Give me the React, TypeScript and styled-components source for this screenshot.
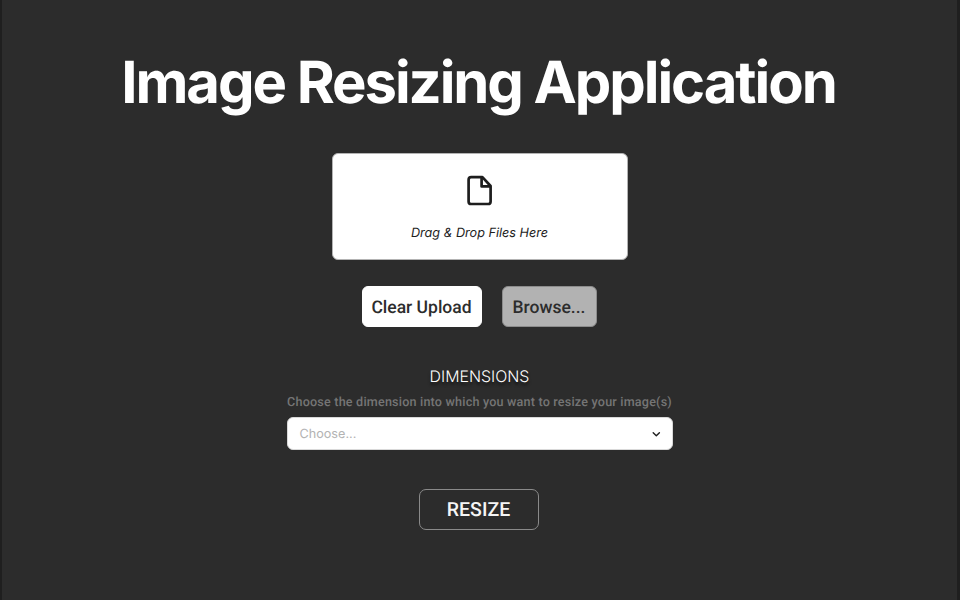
import React from "react";
import styled, { createGlobalStyle } from "styled-components";

const GlobalStyle = createGlobalStyle`
  *, *::before, *::after { box-sizing: border-box; }
  body {
    margin: 0;
    background: #2c2c2c;
    font-family: Inter, sans-serif;
    text-rendering: geometricPrecision;
    -webkit-font-smoothing: antialiased;
  }
  button { font-family: Roboto, sans-serif; text-rendering: inherit; cursor: pointer; }
`;

const Page = styled.main`
  display: flex;
  flex-direction: column;
  align-items: center;
  width: 100%;
  height: 600px;
  padding-top: 47px;
  background: #2c2c2c;
  border-left: 2px solid #1f1f1f;
  border-right: 3px solid #1f1f1f;
  overflow: hidden;
`;

const Title = styled.h1`
  margin: 0 2px 0 0;
  color: #fff;
  font-size: 58px;
  font-weight: 700;
  line-height: 70px;
  letter-spacing: -2.07px;
  white-space: nowrap;
`;

const DropZone = styled.section`
  display: flex;
  flex-direction: column;
  align-items: center;
  width: 296px;
  height: 107px;
  margin-top: 36px;
  padding-top: 20px;
  background: #fff;
  border: 1px solid #b3b3b3;
  border-radius: 6px;
`;

const DropText = styled.p`
  margin: 19px 0 0;
  color: #1e1e1e;
  font-size: 12.65px;
  font-style: italic;
  line-height: 16px;
`;

const Actions = styled.div`
  display: flex;
  gap: 20px;
  margin-top: 26px;
`;

const ActionButton = styled.button<{ $width: number; $muted?: boolean }>`
  width: ${(p) => p.$width}px;
  height: 41px;
  padding: 3px 1px 0 0;
  color: #2c2c2c;
  background: ${(p) => (p.$muted ? "#b2b2b2" : "#fff")};
  border: 1px solid ${(p) => (p.$muted ? "#8c8c8c" : "#fff")};
  border-radius: 6px;
  font-size: 17.5px;
  font-weight: 500;
  line-height: 20px;
`;

const Field = styled.section`
  display: flex;
  flex-direction: column;
  align-items: center;
  margin-top: 40px;
`;

const FieldTitle = styled.h2`
  margin: 0;
  color: #fff;
  font-size: 15.9px;
  font-weight: 300;
  line-height: 20px;
  text-shadow: 0 3px 3px rgba(0, 0, 0, 0.6);
`;

const Hint = styled.p`
  margin: 8px 0 6px;
  color: #757575;
  font-family: Roboto, sans-serif;
  font-size: 12.6px;
  font-weight: 500;
  line-height: 16px;
  letter-spacing: 0.19px;
  white-space: nowrap;
`;

const Select = styled.div`
  display: flex;
  align-items: center;
  justify-content: space-between;
  width: 386px;
  height: 33px;
  padding: 1px 10px 0 12px;
  color: #b3b3b3;
  background: #fff;
  border: 1px solid #d9d9d9;
  border-radius: 6px;
  font-size: 12.65px;
  line-height: 16px;
`;

const Placeholder = styled.span`
  padding-top: 2px;
`;

const ResizeButton = styled.button`
  width: 120px;
  height: 41px;
  margin: 39px 2px 0 0;
  padding: 0;
  color: #f5f5f5;
  background: transparent;
  border: 1px solid #8a8a8a;
  border-radius: 7px;
  font-size: 19.5px;
  font-weight: 500;
`;

const FileIcon = () => (
  <svg width="27" height="33" viewBox="0 0 27 33" fill="none" stroke="#1e1e1e" strokeWidth="2.7" strokeLinejoin="round">
    <path d="M16.4 3.2H5.2a2.6 2.6 0 0 0-2.6 2.6v21.6a2.6 2.6 0 0 0 2.6 2.6h16.8a2.6 2.6 0 0 0 2.6-2.6V12Z" />
    <path d="M15.6 3.2v9.2h9" />
  </svg>
);

const Chevron = () => (
  <svg width="11" height="11" viewBox="0 0 11 11" fill="none" stroke="#1e1e1e" strokeWidth="1.4" strokeLinecap="round" strokeLinejoin="round">
    <path d="m2.2 3.7 3.1 3.1 3.1-3.1" />
  </svg>
);

export default function App() {
  return (
    <>
      <GlobalStyle />
      <Page>
        <Title>Image Resizing Application</Title>
        <DropZone>
          <FileIcon />
          <DropText>Drag &amp; Drop Files Here</DropText>
        </DropZone>
        <Actions>
          <ActionButton $width={120}>Clear Upload</ActionButton>
          <ActionButton $width={95} $muted>Browse...</ActionButton>
        </Actions>
        <Field>
          <FieldTitle>DIMENSIONS</FieldTitle>
          <Hint>Choose the dimension into which you want to resize your image(s)</Hint>
          <Select role="combobox" aria-expanded={false}>
            <Placeholder>Choose...</Placeholder>
            <Chevron />
          </Select>
        </Field>
        <ResizeButton>RESIZE</ResizeButton>
      </Page>
    </>
  );
}
